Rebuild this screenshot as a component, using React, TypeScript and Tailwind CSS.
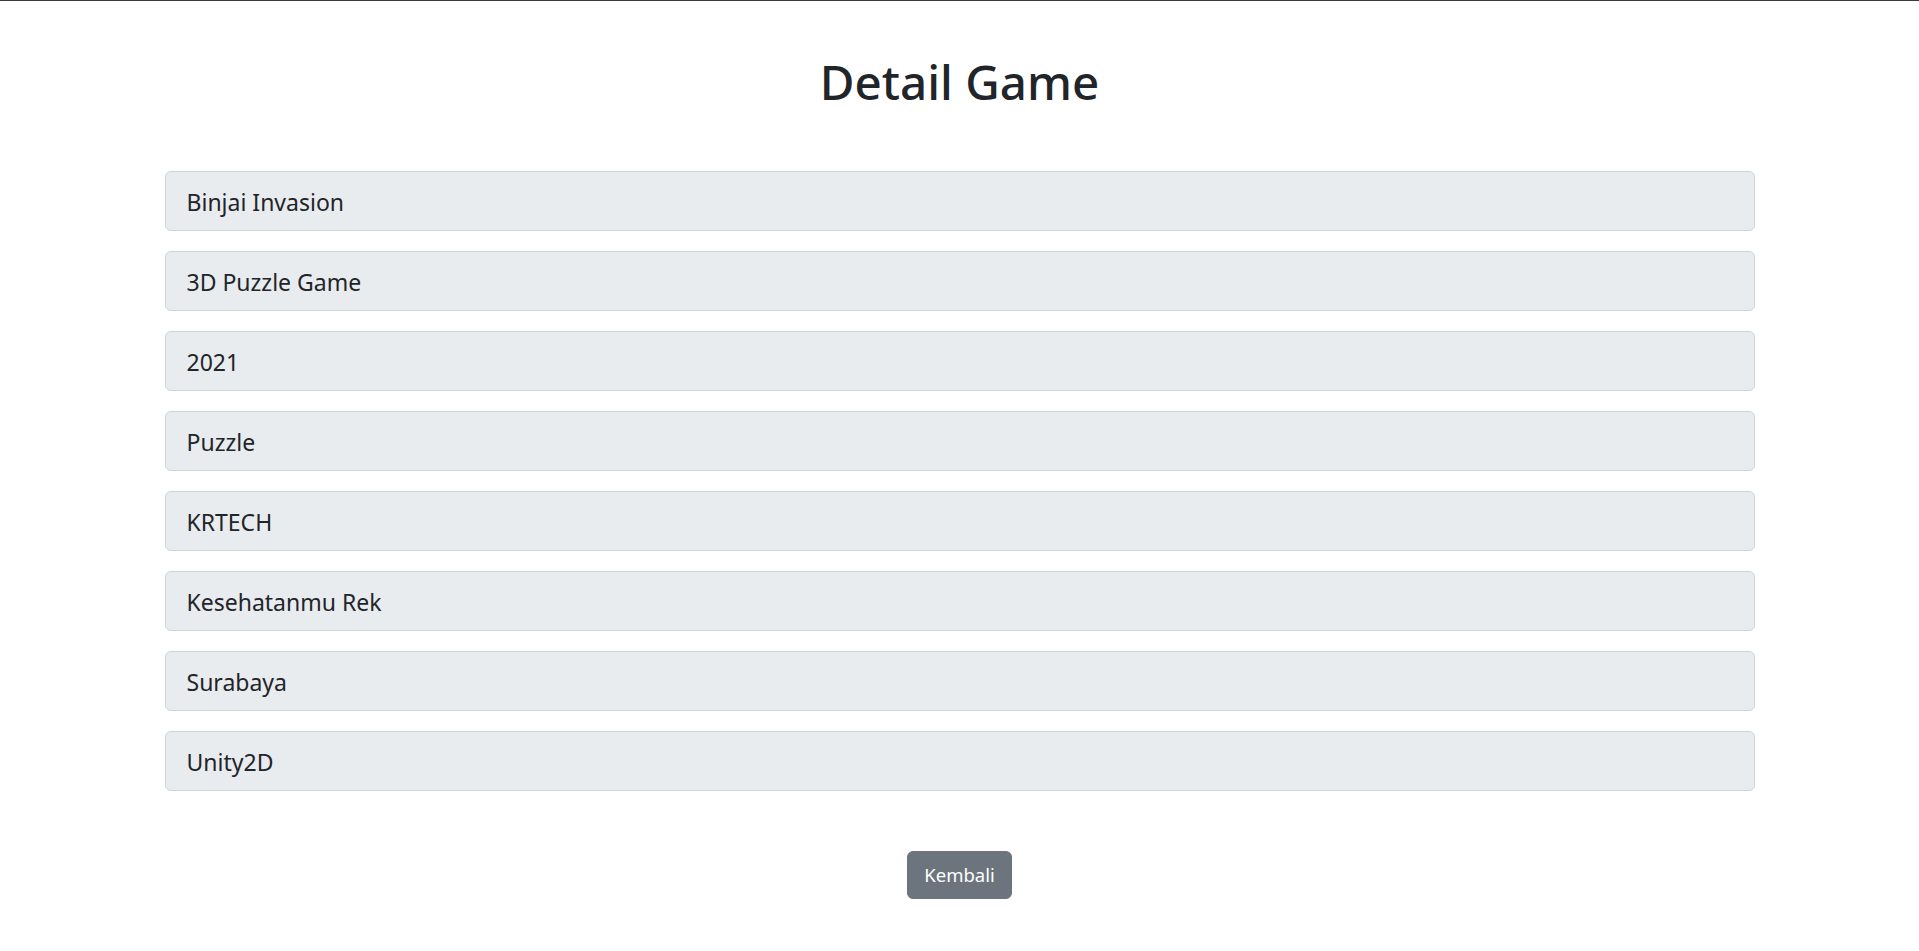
import React from "react";

const items = [
  "Binjai Invasion",
  "3D Puzzle Game",
  "2021",
  "Puzzle",
  "KRTECH",
  "Kesehatanmu Rek",
  "Surabaya",
  "Unity2D",
];

export default function App() {
  return (
    <div
      className="min-h-screen bg-white border-t border-[#3a3a3a] text-[#212529]"
      style={{ fontFamily: '"Noto Sans", "Open Sans", sans-serif' }}
    >
      <div className="pt-[51px] flex flex-col items-center">
        <h1 className="text-[47.5px] leading-[60px] font-medium text-center">Detail Game</h1>
        <div className="mt-[59px] w-[1590px] flex flex-col gap-[20px]">
          {items.map((t) => (
            <div
              key={t}
              className="h-[60px] px-[21px] pt-[2px] flex items-center bg-[#e9ecef] border border-[#ced4da] rounded-[6px] text-[23px]"
            >
              {t}
            </div>
          ))}
        </div>
        <button className="mt-[60px] h-[48px] px-[16px] rounded-[6px] bg-[#6c757d] text-white text-[18.5px] leading-[30px] border border-[#6c757d]">
          Kembali
        </button>
      </div>
    </div>
  );
}
